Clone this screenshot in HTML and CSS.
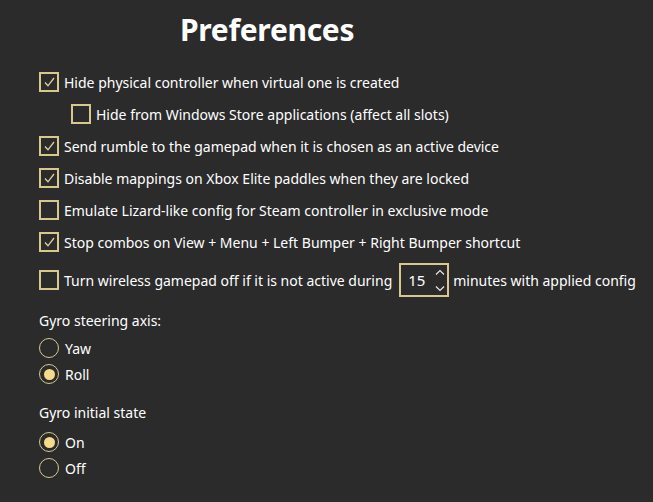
FILE: index.html
```html
<!DOCTYPE html>
<html>
<head>
<meta charset="utf-8">
<link rel="stylesheet" href="styles.css">
</head>
<body>
<div class="page">
  <h1 class="title">Preferences</h1>
  <div class="options">
    <label class="row">
      <span class="box checked"><svg viewBox="0 0 20 20"><path d="M6 10.5 L9 13.8 L15 6"/></svg></span>
      <span>Hide physical controller when virtual one is created</span>
    </label>
    <label class="row sub">
      <span class="box"></span>
      <span>Hide from Windows Store applications (affect all slots)</span>
    </label>
    <label class="row">
      <span class="box checked"><svg viewBox="0 0 20 20"><path d="M6 10.5 L9 13.8 L15 6"/></svg></span>
      <span>Send rumble to the gamepad when it is chosen as an active device</span>
    </label>
    <label class="row">
      <span class="box checked"><svg viewBox="0 0 20 20"><path d="M6 10.5 L9 13.8 L15 6"/></svg></span>
      <span>Disable mappings on Xbox Elite paddles when they are locked</span>
    </label>
    <label class="row">
      <span class="box"></span>
      <span>Emulate Lizard-like config for Steam controller in exclusive mode</span>
    </label>
    <label class="row">
      <span class="box checked"><svg viewBox="0 0 20 20"><path d="M6 10.5 L9 13.8 L15 6"/></svg></span>
      <span>Stop combos on View + Menu + Left Bumper + Right Bumper shortcut</span>
    </label>
    <div class="row tall">
      <span class="box"></span>
      <span>Turn wireless gamepad off if it is not active during</span>
      <span class="spin">
        <span class="spin-val">15</span>
        <span class="spin-arrows">
          <svg viewBox="0 0 10 7"><path d="M1 5.5 L5 1.5 L9 5.5"/></svg>
          <svg viewBox="0 0 10 7"><path d="M1 1.5 L5 5.5 L9 1.5"/></svg>
        </span>
      </span>
      <span>minutes with applied config</span>
    </div>
  </div>

  <div class="group first">
    <div class="group-label">Gyro steering axis:</div>
    <div class="radio"><span class="circle"></span><span>Yaw</span></div>
    <div class="radio"><span class="circle on"></span><span>Roll</span></div>
  </div>

  <div class="group second">
    <div class="group-label">Gyro initial state</div>
    <div class="radio"><span class="circle on"></span><span>On</span></div>
    <div class="radio"><span class="circle"></span><span>Off</span></div>
  </div>
</div>
</body>
</html>
```

FILE: styles.css
```css
html, body {
  margin: 0;
  padding: 0;
  background: #2b2b2b;
}
body {
  color: #ffffff;
  font-family: "Noto Sans", "Open Sans", sans-serif;
  font-size: 14px;
  width: 653px;
  height: 502px;
  overflow: hidden;
}
.page {
  padding-left: 39px;
}
.title {
  margin: 0;
  height: 66px;
  padding-left: 141px;
  padding-top: 10px;
  box-sizing: border-box;
  font-size: 30px;
  font-weight: 700;
  line-height: 40px;
  letter-spacing: -0.3px;
}
.options {
  display: flex;
  flex-direction: column;
}
.row {
  display: flex;
  align-items: center;
  height: 32px;
  white-space: nowrap;
}
.row.sub {
  padding-left: 32px;
}
.row.tall {
  height: 38px;
  margin-top: 3px;
}
.box {
  flex: none;
  width: 20px;
  height: 20px;
  box-sizing: border-box;
  border: 2px solid #d8c890;
  margin-right: 5px;
  display: flex;
  align-items: center;
  justify-content: center;
}
.box svg {
  width: 20px;
  height: 20px;
  flex: none;
}
.box svg path {
  fill: none;
  stroke: #e0d09a;
  stroke-width: 1.3;
}
.spin {
  display: flex;
  align-items: center;
  width: 50px;
  height: 34px;
  box-sizing: border-box;
  border: 2px solid #d8c890;
  margin: 0 4px 0 7px;
}
.spin-val {
  padding-left: 7px;
  width: 27px;
  font-size: 15px;
}
.spin-arrows {
  display: flex;
  flex-direction: column;
  gap: 9px;
}
.spin-arrows svg {
  width: 10px;
  height: 7px;
  display: block;
}
.spin-arrows path {
  fill: none;
  stroke: #e8e8e8;
  stroke-width: 1.2;
}
.group.first {
  margin-top: 9px;
}
.group.second {
  margin-top: 13px;
}
.group-label {
  height: 26px;
  line-height: 26px;
  margin-bottom: 1px;
}
.second .group-label {
  margin-bottom: 3px;
}
.radio {
  display: flex;
  align-items: center;
  height: 26px;
}
.circle {
  flex: none;
  width: 20px;
  height: 20px;
  box-sizing: border-box;
  border: 1.5px solid #d8c890;
  border-radius: 50%;
  margin-right: 6px;
  display: flex;
  align-items: center;
  justify-content: center;
}
.circle.on::after {
  content: "";
  width: 11px;
  height: 11px;
  border-radius: 50%;
  background: #f6da8c;
}
```
